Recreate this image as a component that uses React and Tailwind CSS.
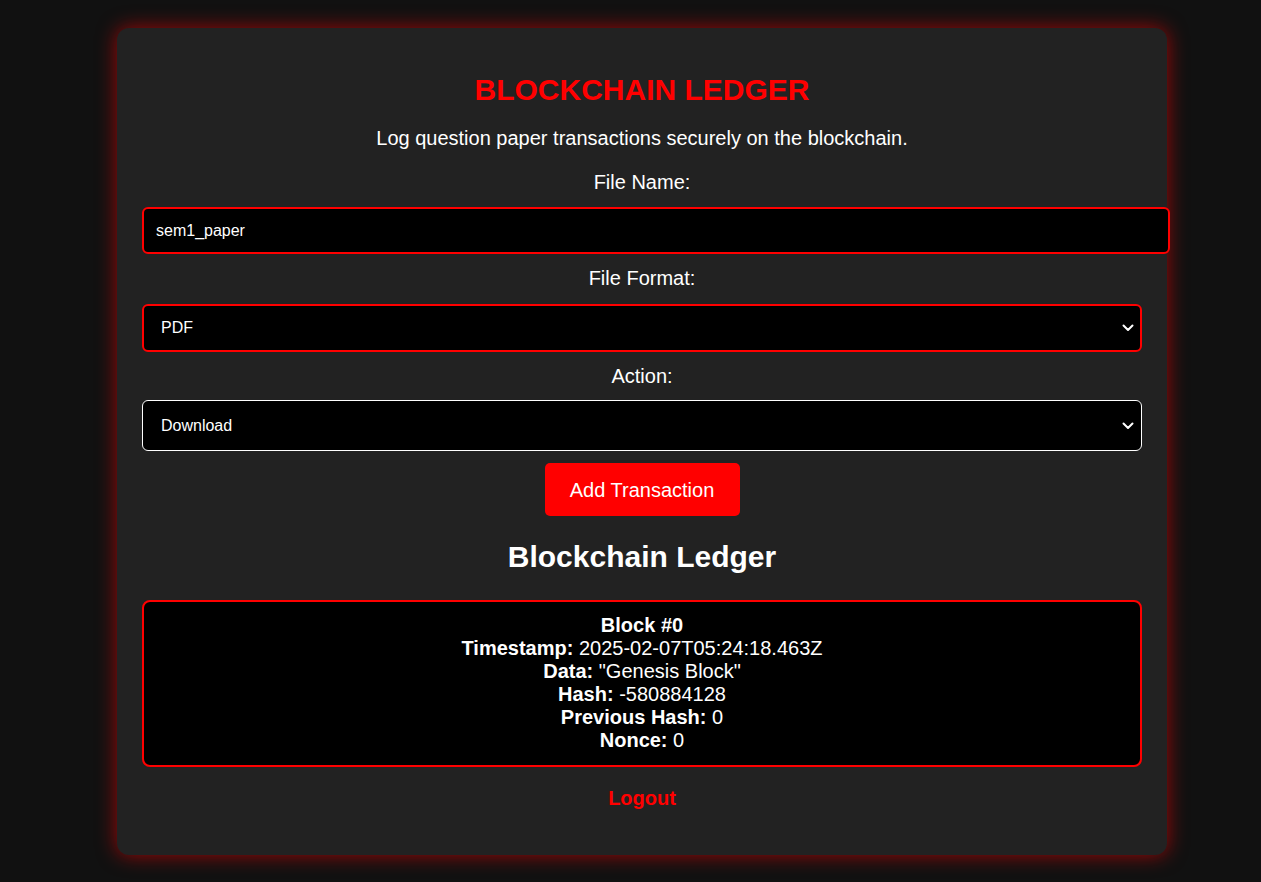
import { useState } from 'react';

function Chevron() {
  return (
    <svg
      className="pointer-events-none absolute right-[8px] top-1/2 -translate-y-1/2"
      width="12"
      height="8"
      viewBox="0 0 12 8"
      fill="none"
    >
      <path d="M1.5 1.5 6 6l4.5-4.5" stroke="#fff" strokeWidth="2" strokeLinecap="round" strokeLinejoin="round" />
    </svg>
  );
}

export default function App() {
  const [fileName, setFileName] = useState('sem1_paper');
  const [format, setFormat] = useState('PDF');
  const [action, setAction] = useState('Download');

  const block = [
    ['Timestamp:', '2025-02-07T05:24:18.463Z'],
    ['Data:', '"Genesis Block"'],
    ['Hash:', '-580884128'],
    ['Previous Hash:', '0'],
    ['Nonce:', '0'],
  ];

  return (
    <div className="min-h-screen bg-[#111111] pl-[117px] pt-[28px] font-['Liberation_Sans',Arial,sans-serif] text-white">
      <div className="w-[1050px] rounded-[12px] bg-[#222222] px-[25px] pb-[45px] pt-[45px] text-center shadow-[0_0_20px_rgba(255,0,0,0.6)]">
        <h1 className="text-[30px] font-bold leading-[34px] text-[#ff0000]">BLOCKCHAIN LEDGER</h1>
        <p className="mt-[20px] text-[20px] leading-[23px]">
          Log question paper transactions securely on the blockchain.
        </p>

        <label className="mt-[21px] block text-[20px] leading-[23px]">File Name:</label>
        <input
          value={fileName}
          onChange={(e) => setFileName(e.target.value)}
          className="mt-[13px] block h-[47px] w-[1028px] rounded-[6px] border-2 border-[#ff0000] bg-black px-[12px] text-[16px] text-white outline-none"
        />

        <label className="mt-[13px] block text-[20px] leading-[23px]">File Format:</label>
        <div className="relative mt-[14px] w-[1000px]">
          <select
            value={format}
            onChange={(e) => setFormat(e.target.value)}
            className="block h-[48px] w-full appearance-none rounded-[6px] border-2 border-[#ff0000] bg-black px-[17px] text-[16px] text-white outline-none"
          >
            <option>PDF</option>
            <option>DOCX</option>
          </select>
          <Chevron />
        </div>

        <label className="mt-[13px] block text-[20px] leading-[23px]">Action:</label>
        <div className="relative mt-[12px] w-[1000px]">
          <select
            value={action}
            onChange={(e) => setAction(e.target.value)}
            className="block h-[51px] w-full appearance-none rounded-[6px] border border-white bg-black px-[18px] text-[16px] text-white outline-none"
          >
            <option>Download</option>
            <option>Upload</option>
          </select>
          <Chevron />
        </div>

        <button className="mt-[12px] h-[53px] w-[195px] rounded-[5px] bg-[#ff0000] text-[20px] text-white">
          Add Transaction
        </button>

        <h2 className="mt-[24px] text-[30px] font-bold leading-[34px]">Blockchain Ledger</h2>

        <div className="mt-[26px] w-[1000px] rounded-[8px] border-2 border-[#ff0000] bg-black pb-[13px] pt-[12px] text-[20px] leading-[23px]">
          <div className="font-bold">Block #0</div>
          {block.map(([k, v]) => (
            <div key={k}>
              <span className="font-bold">{k}</span> {v}
            </div>
          ))}
        </div>

        <div className="mt-[20px] text-[20px] font-bold leading-[23px] text-[#ff0000]">Logout</div>
      </div>
    </div>
  );
}
